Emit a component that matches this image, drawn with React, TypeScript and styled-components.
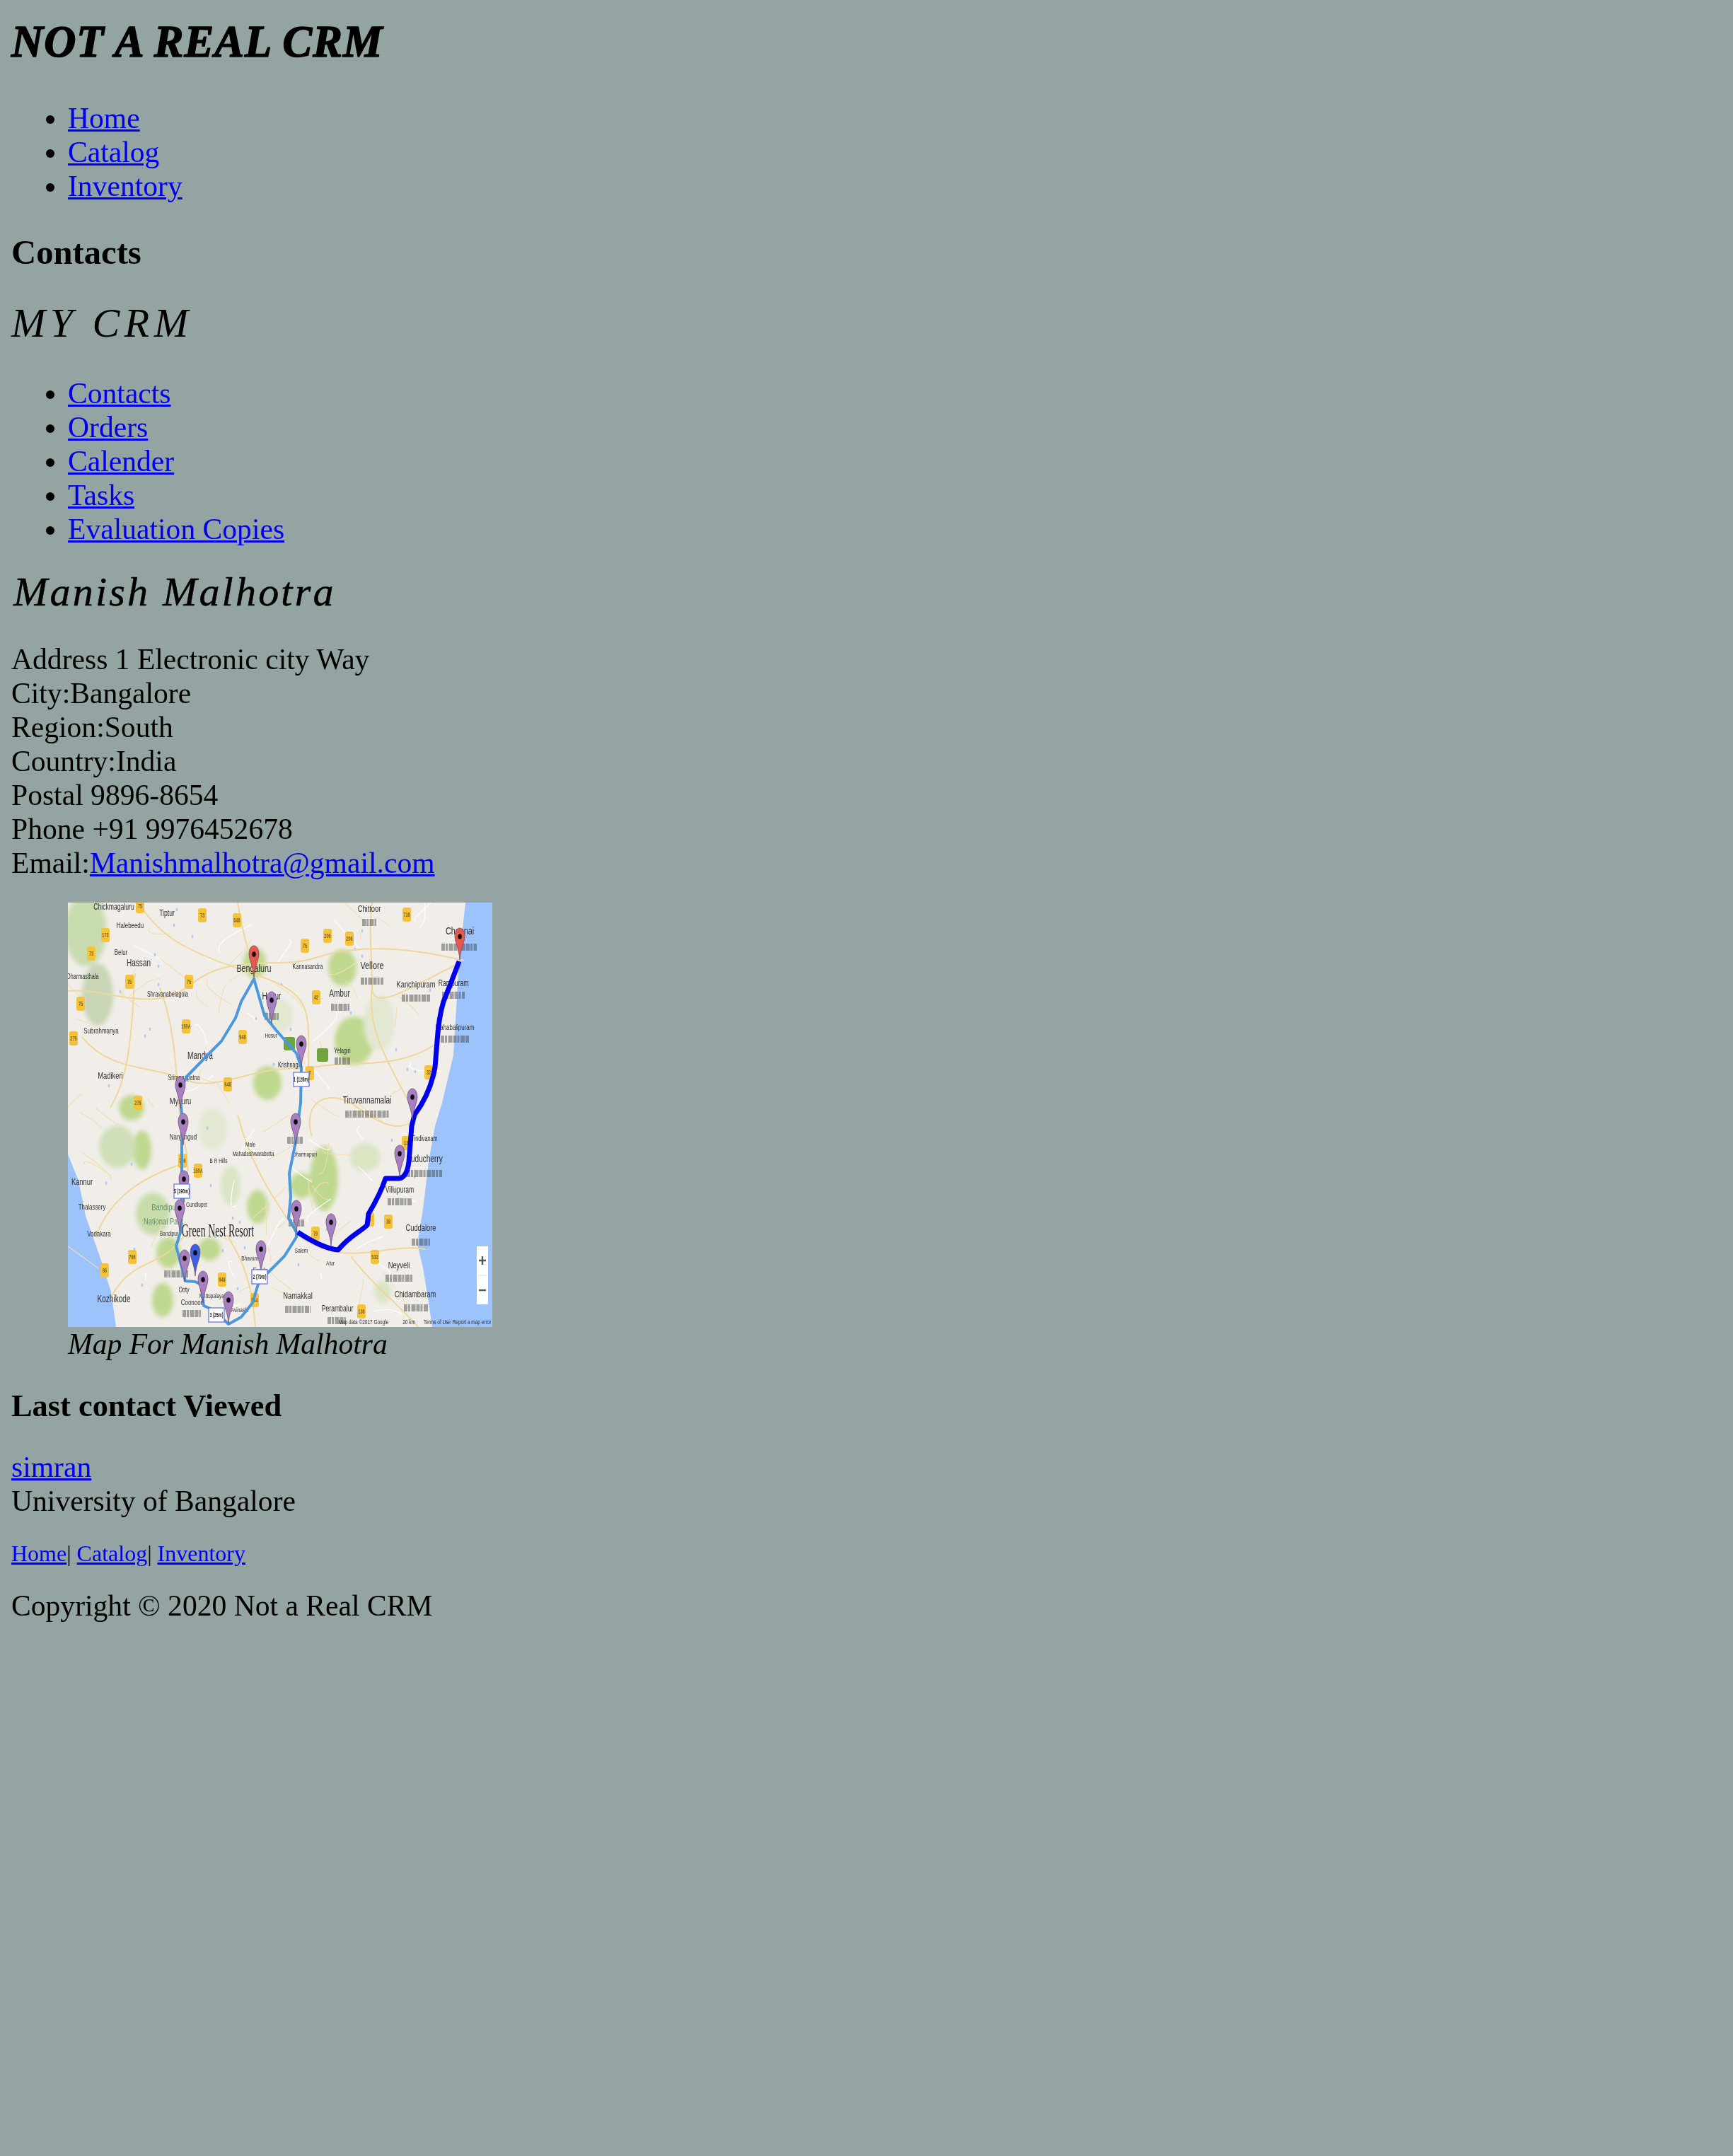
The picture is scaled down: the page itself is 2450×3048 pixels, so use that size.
import React from "react";
import styled, { createGlobalStyle } from "styled-components";

const Global = createGlobalStyle`
  html, body { margin: 0; background: #93a4a3; }
  body { min-height: 3048px; }
`;

const Page = styled.div`
  padding: 0 16px;
  font-family: "Liberation Serif", "Times New Roman", serif;
  font-size: 41.6px;
  line-height: 48px;
  color: #000;
  filter: blur(0.45px);
  a { color: #0000ee; text-decoration: underline; text-decoration-thickness: 3px; }
`;

const BrandTitle = styled.h1`
  margin: 23px 0 0;
  font-size: 62.4px;
  line-height: 72px;
  font-weight: 700;
  font-style: italic;
  letter-spacing: 1.1px;
  -webkit-text-stroke: 1.6px #000;
`;

const NavList = styled.ul<{ $top: number }>`
  margin: ${(p) => p.$top}px 0 0;
  padding: 0 0 0 80px;
`;

const SectionHeading = styled.h3<{ $top: number; $size: number }>`
  margin: ${(p) => p.$top}px 0 0;
  font-size: ${(p) => p.$size}px;
  line-height: 56px;
  font-weight: 700;
`;

const AppTitle = styled.h2`
  margin: 36px 0 0;
  font-size: 58px;
  line-height: 72px;
  font-weight: 400;
  font-style: italic;
  letter-spacing: 6.5px;
`;

const ContactName = styled.h3`
  margin: 32px 0 0;
  padding-left: 3px;
  font-size: 58px;
  line-height: 66px;
  font-weight: 400;
  font-style: italic;
  letter-spacing: 3.2px;
  -webkit-text-stroke: 0.5px #000;
`;

const Address = styled.div`
  margin-top: 38px;
`;

const MapFigure = styled.figure`
  margin: 32px 0 0 80px;
`;

const MapSvg = styled.svg`
  display: block;
  width: 600px;
  height: 600px;
`;

const Caption = styled.figcaption`
  font-style: italic;
  line-height: 48px;
`;

const LastViewed = styled.div`
  margin-top: 35px;
`;

const FooterLinks = styled.div`
  margin-top: 32px;
  font-size: 32px;
  line-height: 36px;
`;

const Copyright = styled.div`
  margin-top: 32px;
`;

type Label = [number, number, string, number?, string?];

const labels: Label[] = [
  [65, 10, "Chickmagaluru", 12], [140, 19, "Tiptur", 12], [88, 36, "Halebeedu", 11], [75, 74, "Belur", 11],
  [100, 90, "Hassan", 14], [21, 108, "Dharmasthala", 10], [141, 133, "Shravanabelagola", 10], [47, 185, "Subrahmanya", 11],
  [60, 249, "Madikeri", 13], [187, 221, "Mandya", 14], [164, 251, "Srirangapatna", 10], [159, 285, "Mysuru", 13],
  [263, 98, "Bengaluru", 15], [339, 94, "Kannasandra", 10], [426, 13, "Chittoor", 13], [430, 94, "Vellore", 15],
  [384, 133, "Ambur", 14], [492, 120, "Kanchipuram", 13], [545, 118, "Rampuram", 12], [547, 180, "Mahabalipuram", 11],
  [314, 233, "Krishnagiri", 10], [288, 137, "Hosur", 14], [287, 191, "Hosur", 9], [388, 213, "Yelagiri", 10],
  [423, 284, "Tiruvannamalai", 14], [554, 45, "Chennai", 15], [163, 335, "Nanjangud", 11], [20, 399, "Kannur", 13],
  [34, 434, "Thalassery", 11], [44, 472, "Vadakara", 11], [137, 435, "Bandipur", 13, "#5f8f5f"], [135, 455, "National Park", 13, "#5f8f5f"],
  [143, 471, "Bandipur", 9], [182, 430, "Gundlupet", 9], [262, 358, "Mahadeshwarabetta", 9], [258, 345, "Male", 9],
  [213, 368, "B R Hills", 9], [335, 359, "Dharmapuri", 9], [65, 565, "Kozhikode", 14], [164, 551, "Ooty", 10],
  [175, 569, "Coonoor", 11], [206, 559, "Mettupalayam", 9], [243, 579, "Avinashi", 9], [257, 506, "Bhavani", 9],
  [272, 524, "Erode", 11], [330, 495, "Salem", 9], [371, 513, "Atur", 9], [325, 560, "Namakkal", 13],
  [381, 578, "Perambalur", 12], [468, 517, "Neyveli", 13], [491, 558, "Chidambaram", 13], [499, 464, "Cuddalore", 13],
  [469, 410, "Villupuram", 12], [504, 367, "Puducherry", 14], [504, 337, "Tindivanam", 10], [418, 596, "Map data ©2017 Google", 9],
  [482, 596, "20 km", 9], [522, 596, "Terms of Use", 9], [571, 596, "Report a map error", 9],
];

const smudges: [number, number, number][] = [
  [553, 63, 50], [430, 111, 32], [385, 148, 26], [492, 135, 40], [545, 131, 32], [547, 193, 40], [288, 161, 20],
  [388, 224, 22], [423, 299, 62], [321, 336, 22], [504, 383, 50], [469, 423, 34], [468, 531, 38], [492, 573, 34],
  [499, 480, 26], [325, 575, 36], [323, 453, 22], [153, 525, 34], [175, 581, 26], [380, 591, 26], [426, 28, 20],
];

const shields: [number, number, string][] = [
  [102, 5, "75"], [190, 18, "73"], [239, 25, "648"], [479, 17, "716"], [53, 46, "173"], [33, 72, "73"], [87, 112, "75"],
  [171, 112, "75"], [335, 61, "75"], [367, 47, "206"], [398, 51, "206"], [351, 134, "42"], [18, 143, "75"], [167, 175, "150A"],
  [247, 190, "948"], [8, 192, "275"], [226, 257, "948"], [99, 283, "275"], [510, 240, "32"], [342, 241, "7"], [162, 365, "766"],
  [184, 379, "150A"], [91, 501, "766"], [52, 520, "66"], [218, 533, "948"], [350, 468, "79"], [453, 451, "38"], [427, 448, "5"],
  [434, 501, "532"], [264, 562, "544"], [415, 578, "136"], [478, 340, "13"],
];

const greens: [number, number, number, number, string?][] = [
  [25, 40, 30, 50, "#c9dcb0"], [42, 130, 22, 44, "#c8d6b6"], [264, 85, 16, 22], [388, 92, 20, 26], [405, 195, 28, 34],
  [282, 255, 20, 24], [90, 290, 18, 18], [105, 350, 13, 28], [70, 345, 26, 30, "#d0dfb8"], [362, 390, 20, 46],
  [268, 430, 15, 24], [142, 495, 17, 22], [200, 490, 16, 16], [134, 562, 15, 24], [120, 440, 24, 30, "#c8dcaa"],
  [330, 400, 16, 18], [420, 360, 22, 20, "#dae5c4"], [230, 400, 14, 28, "#dae5c4"], [445, 550, 12, 16, "#dae5c4"],
  [205, 320, 20, 30, "#e2e8d2"], [440, 170, 22, 40, "#e2e8d2"], [300, 160, 18, 24, "#e2e8d2"],
];

const roads = [
  "M0 125 C60 120 120 160 175 115 S300 95 350 78 S470 60 560 82",
  "M100 0 C130 50 170 70 260 100 S340 150 340 240",
  "M130 120 C160 200 150 280 165 340 S150 450 165 470",
  "M20 190 C60 240 120 230 165 250 S260 230 330 235",
  "M335 235 C400 220 460 240 520 200",
  "M430 120 C420 190 470 250 490 300",
  "M160 370 C100 390 60 420 40 470",
  "M165 470 C130 520 90 500 60 560",
  "M240 300 C260 380 300 430 322 465",
  "M325 470 C390 520 450 480 505 490",
  "M225 470 C250 510 260 540 265 600",
  "M400 500 C430 540 470 570 495 600",
  "M240 0 C250 60 255 60 262 100",
  "M430 0 C425 40 430 80 430 120 S500 110 555 85",
  "M95 100 C90 170 90 240 60 290",
  "M345 330 C330 280 370 260 410 290 S470 320 487 310",
];

const scatter = (() => {
  let seed = 73;
  const next = (n: number) => {
    seed = (seed * 1103515245 + 12345) & 0x7fffffff;
    return (seed >> 8) % n;
  };
  const lines: string[] = [];
  const dots: [number, number][] = [];
  for (let i = 0; i < 90; i++) {
    const x = next(500) + 20;
    const y = next(590);
    const dx = next(90) - 45;
    const dy = next(90) - 45;
    lines.push(`M${x} ${y} q${next(30) - 15} ${next(30) - 15} ${dx} ${dy}`);
  }
  for (let i = 0; i < 45; i++) dots.push([next(480) + 40, next(590)]);
  return { lines, dots };
})();

const pins: [number, number, string][] = [
  [263, 106, "#e8584f"], [554, 81, "#e8584f"], [288, 171, "#a97fc4"], [330, 233, "#a97fc4"], [159, 291, "#a97fc4"],
  [163, 343, "#a97fc4"], [164, 424, "#a97fc4"], [158, 465, "#a97fc4"], [165, 536, "#a97fc4"], [180, 528, "#3f5fe0"],
  [191, 566, "#a97fc4"], [227, 595, "#a97fc4"], [273, 523, "#a97fc4"], [323, 466, "#a97fc4"], [372, 485, "#a97fc4"],
  [322, 343, "#a97fc4"], [487, 308, "#a97fc4"], [469, 388, "#a97fc4"],
];

const routeBoxes: [number, number, string][] = [
  [330, 250, "1 (128m)"], [161, 408, "5 (190m)"], [210, 583, "3 (25m)"], [271, 529, "2 (79m)"],
];

const MapArt = () => (
  <MapSvg viewBox="0 0 600 600" role="img" aria-label="Map">
    <defs>
      <filter id="soft" x="-5%" y="-5%" width="110%" height="110%"><feGaussianBlur stdDeviation="0.65" /></filter>
      <filter id="patch" x="-30%" y="-30%" width="160%" height="160%"><feGaussianBlur stdDeviation="3" /></filter>
    </defs>
    <rect width="600" height="600" fill="#f1eeea" />
    <g filter="url(#patch)">
      {greens.map(([x, y, rx, ry, c], i) => (
        <ellipse key={i} cx={x} cy={y} rx={rx} ry={ry} fill={c ?? "#bfd88f"} />
      ))}
    </g>
    <g filter="url(#soft)">
      <path d="M562 0 L553 83 L545 216 L529 283 L519 316 L510 366 L506 400 L502 433 L494 483 L502 516 L510 566 L515 600 L600 600 L600 0 Z" fill="#9cc3fb" />
      <path d="M0 356 L15 393 L25 443 L45 500 L61 550 L68 600 L0 600 Z" fill="#9cc3fb" />
      {scatter.lines.map((d, i) => (
        <path key={i} d={d} fill="none" stroke={i % 3 === 0 ? "#fff" : "#f1deb2"} strokeWidth="1.1" />
      ))}
      {scatter.dots.map(([x, y], i) => (
        <ellipse key={i} cx={x} cy={y} rx="1.4" ry="2.4" fill="#a9cbf6" />
      ))}
      {roads.map((d, i) => (
        <path key={i} d={d} fill="none" stroke="#efd79c" strokeWidth="2" />
      ))}
      {shields.map(([x, y, t], i) => (
        <g key={i}>
          <rect x={x - 6} y={y - 10} width="12" height="20" rx="3" fill="#f5c33b" />
          <text x="0" y="0" transform={`translate(${x} ${y + 2.5}) scale(.62 1)`} textAnchor="middle" fontSize="9" fontWeight="700" fontFamily="Liberation Sans, sans-serif" fill="#7a6420">{t}</text>
        </g>
      ))}
      <rect x="305" y="190" width="16" height="19" rx="3" fill="#6ea33c" />
      <rect x="352" y="206" width="16" height="19" rx="3" fill="#6ea33c" />
      {smudges.map(([x, y, w], i) => (
        <line key={i} x1={x - w / 2} x2={x + w / 2} y1={y} y2={y} stroke="#333" strokeWidth="10" strokeDasharray="5 1 3 1.5 6 1" opacity=".42" />
      ))}
      {labels.map(([x, y, t, s, c], i) => (
        <text key={i} transform={`translate(${x} ${y}) scale(.72 1)`} textAnchor="middle" fontSize={s ?? 10} fontFamily="Liberation Sans, sans-serif" fill={c ?? "#2e2e2e"}>{t}</text>
      ))}
      <text transform="translate(212 472) scale(.66 1.15)" textAnchor="middle" fontSize="21" fontFamily="Liberation Serif, serif" fill="#222">Green Nest Resort</text>
      <path d="M263 108 L245 140 L237 163 L217 196 L200 213 L168 246 L158 266 L161 300 L161 400 L160 463 L153 486 L155 493 L166 535 L180 536 L188 540 L192 570 L206 576 L227 596 L245 586 L261 566 L270 536 L286 520 L306 500 L323 473 L323 466 L312 446 L315 416 L313 383 L321 343 L329 283 L330 233 L323 213 L294 180 L278 160 Z" fill="none" stroke="#4b98de" strokeWidth="4" strokeLinejoin="round" />
      <path d="M553 83 C545 105 537 125 531 140 C525 160 523 180 522 196 L519 233 C515 255 505 280 490 300 L486 316 L482 366 C480 385 473 391 465 390 L449 390 C444 405 437 420 425 440 L423 456 C410 468 400 470 382 491 C370 490 351 483 325 466" fill="none" stroke="#0000ee" strokeWidth="7" strokeLinejoin="round" />
      {pins.map(([x, y, c], i) => (
        <g key={i}>
          <path d={`M${x} ${y} C${x - 1} ${y - 16} ${x - 7} ${y - 25} ${x - 7} ${y - 33} C${x - 7} ${y - 49} ${x + 7} ${y - 49} ${x + 7} ${y - 33} C${x + 7} ${y - 25} ${x + 1} ${y - 16} ${x} ${y} Z`} fill={c} stroke="#5b4a60" strokeWidth=".7" />
          <ellipse cx={x} cy={y - 33} rx="2.8" ry="3.8" fill="#111" />
        </g>
      ))}
      {routeBoxes.map(([x, y, t], i) => (
        <g key={i}>
          <rect x={x - 11} y={y - 10} width="22" height="20" fill="#fff" stroke="#5a6ee8" strokeWidth="1.2" />
          <text transform={`translate(${x} ${y + 3}) scale(.6 1)`} textAnchor="middle" fontSize="9" fontWeight="700" fontFamily="Liberation Sans, sans-serif" fill="#222">{t}</text>
        </g>
      ))}
      <rect x="578" y="486" width="16" height="82" rx="1" fill="#fff" />
      <path d="M586 500 V512 M581 506 H591 M581 548 H591" stroke="#555" strokeWidth="2.4" />
      <path d="M581 527 H591" stroke="#ddd" strokeWidth="1" />
    </g>
  </MapSvg>
);

export default function App() {
  return (
    <Page>
      <Global />
      <BrandTitle>NOT A REAL CRM</BrandTitle>
      <NavList $top={48}>
        <li><a href="#home">Home</a></li>
        <li><a href="#catalog">Catalog</a></li>
        <li><a href="#inventory">Inventory</a></li>
      </NavList>
      <SectionHeading $top={42} $size={48.67}>Contacts</SectionHeading>
      <AppTitle>MY CRM</AppTitle>
      <NavList $top={39}>
        <li><a href="#contacts">Contacts</a></li>
        <li><a href="#orders">Orders</a></li>
        <li><a href="#calender">Calender</a></li>
        <li><a href="#tasks">Tasks</a></li>
        <li><a href="#copies">Evaluation Copies</a></li>
      </NavList>
      <ContactName>Manish Malhotra</ContactName>
      <Address>
        Address 1 Electronic city Way<br />
        City:Bangalore<br />
        Region:South<br />
        Country:India<br />
        Postal 9896-8654<br />
        Phone +91 9976452678<br />
        Email:<a href="#mail">Manishmalhotra@gmail.com</a>
      </Address>
      <MapFigure>
        <MapArt />
        <Caption>Map For Manish Malhotra</Caption>
      </MapFigure>
      <SectionHeading $top={35} $size={44.4}>Last contact Viewed</SectionHeading>
      <LastViewed>
        <a href="#simran">simran</a><br />
        University of Bangalore
      </LastViewed>
      <FooterLinks>
        <a href="#home">Home</a>| <a href="#catalog">Catalog</a>| <a href="#inventory">Inventory</a>
      </FooterLinks>
      <Copyright>Copyright © 2020 Not a Real CRM</Copyright>
    </Page>
  );
}
